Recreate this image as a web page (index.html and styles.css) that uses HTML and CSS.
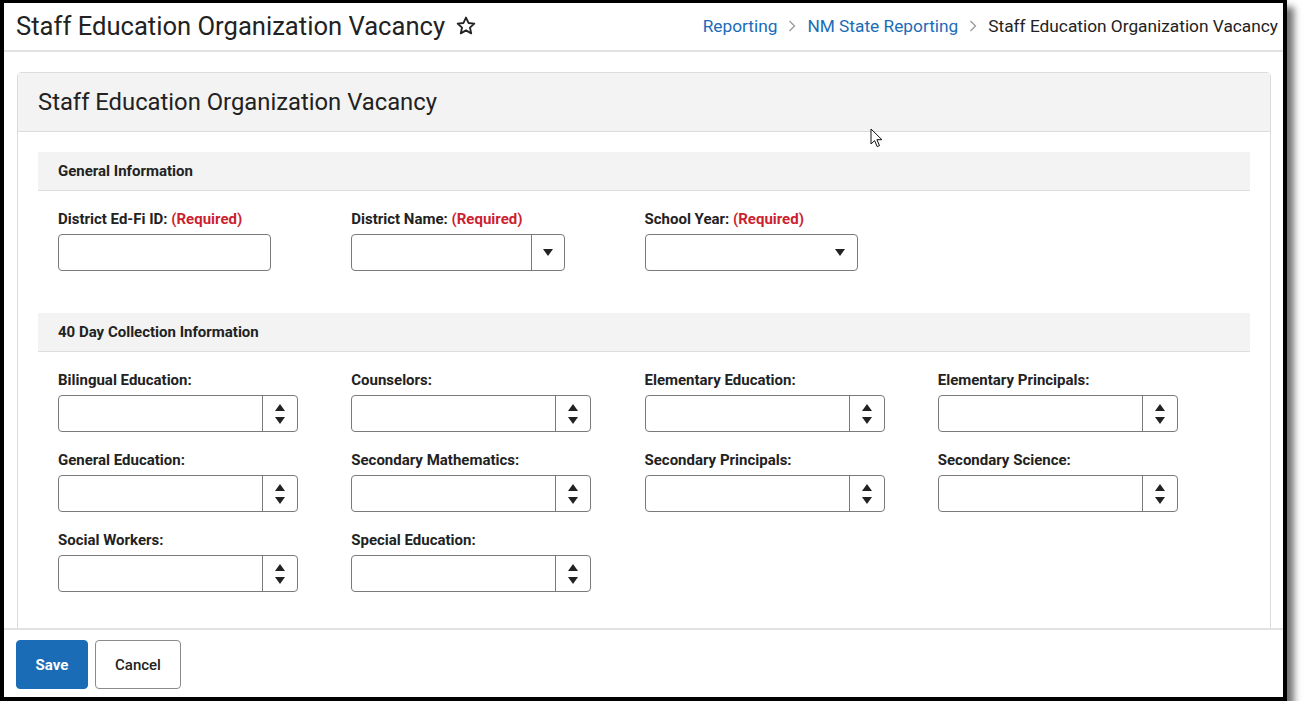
FILE: index.html
```html
<!DOCTYPE html>
<html lang="en">
<head>
<meta charset="utf-8">
<title>Staff Education Organization Vacancy</title>
<link rel="stylesheet" href="styles.css">
</head>
<body>
<div class="frame">
  <header class="topbar">
    <div class="page-title">
      <h1>Staff Education Organization Vacancy</h1>
      <svg class="star" width="22" height="22" viewBox="0 0 24 24"><path d="M12 2.8l2.7 5.9 6.4.7-4.8 4.3 1.4 6.3L12 16.8l-5.7 3.2 1.4-6.3-4.8-4.3 6.4-.7z" fill="none" stroke="#222" stroke-width="2" stroke-linejoin="round"/></svg>
    </div>
    <nav class="crumbs">
      <a class="crumb-link">Reporting</a>
      <svg class="chev" width="8" height="12" viewBox="0 0 8 12"><path d="M1.5 1l5 5-5 5" fill="none" stroke="#9a9a9a" stroke-width="1.3"/></svg>
      <a class="crumb-link">NM State Reporting</a>
      <svg class="chev" width="8" height="12" viewBox="0 0 8 12"><path d="M1.5 1l5 5-5 5" fill="none" stroke="#9a9a9a" stroke-width="1.3"/></svg>
      <span class="crumb-current">Staff Education Organization Vacancy</span>
    </nav>
  </header>

  <main class="content">
    <section class="card">
      <div class="card-head">Staff Education Organization Vacancy</div>
      <div class="card-body">
        <div class="section-head">General Information</div>
        <div class="grid">
          <div class="field">
            <label class="lbl">District Ed-Fi ID: <span class="req">(Required)</span></label>
            <div class="box text"></div>
          </div>
          <div class="field">
            <label class="lbl">District Name: <span class="req">(Required)</span></label>
            <div class="box select divided"><span class="btn"><i class="tri down"></i></span></div>
          </div>
          <div class="field">
            <label class="lbl">School Year: <span class="req">(Required)</span></label>
            <div class="box select"><span class="btn"><i class="tri down"></i></span></div>
          </div>
        </div>

        <div class="section-head second">40 Day Collection Information</div>
        <div class="grid">
          <div class="field"><label class="lbl">Bilingual Education:</label><div class="box num"><span class="spin"><i class="tri up"></i><i class="tri down"></i></span></div></div>
          <div class="field"><label class="lbl">Counselors:</label><div class="box num"><span class="spin"><i class="tri up"></i><i class="tri down"></i></span></div></div>
          <div class="field"><label class="lbl">Elementary Education:</label><div class="box num"><span class="spin"><i class="tri up"></i><i class="tri down"></i></span></div></div>
          <div class="field"><label class="lbl">Elementary Principals:</label><div class="box num"><span class="spin"><i class="tri up"></i><i class="tri down"></i></span></div></div>
          <div class="field"><label class="lbl">General Education:</label><div class="box num"><span class="spin"><i class="tri up"></i><i class="tri down"></i></span></div></div>
          <div class="field"><label class="lbl">Secondary Mathematics:</label><div class="box num"><span class="spin"><i class="tri up"></i><i class="tri down"></i></span></div></div>
          <div class="field"><label class="lbl">Secondary Principals:</label><div class="box num"><span class="spin"><i class="tri up"></i><i class="tri down"></i></span></div></div>
          <div class="field"><label class="lbl">Secondary Science:</label><div class="box num"><span class="spin"><i class="tri up"></i><i class="tri down"></i></span></div></div>
          <div class="field"><label class="lbl">Social Workers:</label><div class="box num"><span class="spin"><i class="tri up"></i><i class="tri down"></i></span></div></div>
          <div class="field"><label class="lbl">Special Education:</label><div class="box num"><span class="spin"><i class="tri up"></i><i class="tri down"></i></span></div></div>
        </div>
      </div>
    </section>
  </main>

  <footer class="actions">
    <button class="btn-save">Save</button>
    <button class="btn-cancel">Cancel</button>
  </footer>

  <svg class="cursor" width="14" height="20" viewBox="0 0 14 20"><path d="M1 1v15l3.6-3.4 2.6 6 2.3-1-2.6-5.9h5z" fill="#fff" stroke="#111" stroke-width="1" stroke-linejoin="round"/></svg>
</div>
</body>
</html>
```

FILE: styles.css
```css
* { box-sizing: border-box; }
html, body { margin: 0; padding: 0; background: #fff; }
body { font-family: Roboto, "Noto Sans", Arial, sans-serif; color: #222; }

.frame {
  position: relative;
  width: 1287px;
  height: 701px;
  border-style: solid;
  border-color: #000;
  border-width: 3px 4px 4px 4px;
  background: #fff;
  box-shadow: 7px 7px 7px rgba(0,0,0,0.55);
  display: flex;
  flex-direction: column;
  overflow: hidden;
}

.topbar {
  height: 49px;
  flex: none;
  border-bottom: 2px solid #e2e2e2;
  display: flex;
  align-items: center;
  justify-content: space-between;
  padding: 0 5px 0 12px;
}
.page-title { display: flex; align-items: center; gap: 10px; }
.page-title h1 { margin: 0; font-size: 25.6px; font-weight: 400; color: #222; letter-spacing: 0; position: relative; top: -1px; }
.star { position: relative; top: -1px; }
.crumbs { display: flex; align-items: center; gap: 10px; font-size: 17.3px; position: relative; top: -1px; }
.crumb-link { color: #1a6cb7; }
.crumb-current { color: #222; }
.chev { margin: 0 1px; }

.content {
  flex: 1;
  overflow: hidden;
  padding: 20px 12px 0 13px;
}
.card {
  border: 1px solid #dcdcdc;
  border-radius: 4px 4px 0 0;
  height: 620px;
}
.card-head {
  height: 59px;
  background: #f3f3f3;
  border-bottom: 1px solid #dcdcdc;
  padding: 15px 0 0 20px;
  font-size: 23.8px;
  color: #222;
}
.card-body { padding: 20px 20px 0 20px; }

.section-head {
  height: 39px;
  background: #f3f3f3;
  border-bottom: 1px solid #dedede;
  padding: 10px 20px 0 20px;
  font-size: 15px;
  font-weight: 700;
  color: #222;
}
.section-head.second { margin-top: 42px; }

.grid {
  display: grid;
  grid-template-columns: repeat(4, 1fr);
  row-gap: 20px;
  padding: 20px 19px 0 20px;
}
.field { display: flex; flex-direction: column; }
.lbl { font-size: 15px; font-weight: 700; line-height: 16px; height: 16px; margin-bottom: 7px; color: #222; }
.req { color: #cc1f2f; }

.box {
  position: relative;
  height: 37px;
  border: 1px solid #7a7a7a;
  border-radius: 4px;
  background: #fff;
}
.box.text, .box.select { width: 213px; }
.box.divided { width: 214px; }
.box.num { width: 240px; }

.btn {
  position: absolute;
  right: 0; top: 0; bottom: 0;
  width: 33px;
  display: flex; align-items: center; justify-content: center;
}
.box.divided .btn { border-left: 1px solid #7a7a7a; }
.box.select:not(.divided) .btn { width: 34px; }

.spin {
  position: absolute;
  right: 0; top: 0; bottom: 0;
  width: 35px;
  border-left: 1px solid #7a7a7a;
  display: flex; flex-direction: column; align-items: center; justify-content: center;
  gap: 6px;
}

.tri { display: block; width: 0; height: 0; border-left: 5px solid transparent; border-right: 5px solid transparent; }
.tri.down { border-top: 7px solid #222; }
.tri.up { border-bottom: 7px solid #222; }

.actions {
  flex: none;
  height: 69px;
  border-top: 2px solid #e2e2e2;
  background: #fff;
  display: flex;
  gap: 7px;
  padding: 10px 0 0 12px;
}
.actions button {
  height: 49px;
  border-radius: 4px;
  font-family: Roboto, "Noto Sans", Arial, sans-serif;
  font-size: 15px;
  cursor: pointer;
}
.btn-save {
  width: 72px;
  background: #1a6cb6;
  border: 1px solid #1a6cb6;
  color: #fff;
  font-weight: 700;
}
.btn-cancel {
  width: 86px;
  background: #fff;
  border: 1px solid #8a8a8a;
  color: #222;
  font-weight: 500;
}

.cursor { position: absolute; left: 866px; top: 125px; }
```
